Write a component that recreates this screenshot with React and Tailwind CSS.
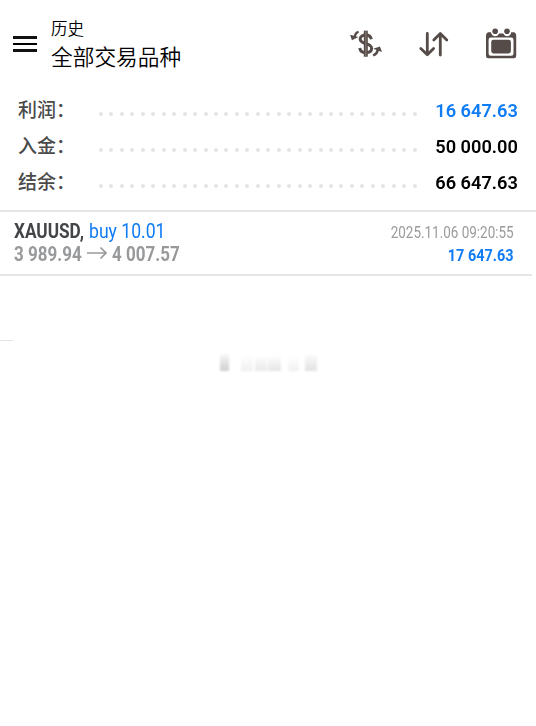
import React from 'react';

const rows = [
  { label: '利润', value: '16 647.63', color: 'text-[#0f7cf5]' },
  { label: '入金', value: '50 000.00', color: 'text-black' },
  { label: '结余', value: '66 647.63', color: 'text-black' },
];

function MenuIcon() {
  return (
    <div className="mt-9 ml-[13px] flex h-4 w-6 flex-col justify-between">
      <span className="h-[3px] bg-[#111]" />
      <span className="h-[2px] bg-black" />
      <span className="h-[3px] bg-[#111]" />
    </div>
  );
}

function DollarIcon() {
  return (
    <svg className="h-8 w-8" viewBox="0 0 32 32" fill="none" stroke="#554b48">
      <path d="M15.8 2.7V28.7" strokeWidth="4" />
      <path d="M21.3 11.3C20.7 8.5 18.7 7 15.8 7C12.4 7 10.2 8.7 10.2 11.1C10.2 13.7 12.4 14.7 15.8 15.6C19.6 16.6 21.6 17.8 21.6 20.4C21.6 23 19.4 24.5 15.8 24.5C12.4 24.5 10.2 23 9.7 19.9" strokeWidth="3" />
      <path d="M15.8 3.2V28.2" stroke="#81736f" strokeWidth="1.3" />
      <path d="M8.6 3.8C6 4.4 4.9 6.2 4.6 9.4" strokeWidth="2.4" />
      <path d="M0.1 6.8L1.9 12.2L8.4 9.1Z" fill="#554b48" stroke="none" />
      <path d="M23.1 27.4C25.9 26.3 27.5 24.3 27.8 21.3" strokeWidth="2.6" />
      <path d="M23.2 20.8L29.9 18.5L32 24Z" fill="#554b48" stroke="none" />
    </svg>
  );
}

function SortIcon() {
  return (
    <svg className="h-8 w-8" viewBox="0 0 32 32" fill="none" stroke="#554b48" strokeWidth="2.8" strokeLinecap="round" strokeLinejoin="round">
      <path d="M9.3 5.5V26.5M2.8 20.4L9.3 26.7L15.6 20.4" />
      <path d="M22.3 27V5.7M15.8 12L22.3 5.5L28.8 12" />
    </svg>
  );
}

function CalendarIcon() {
  return (
    <svg className="h-8 w-8" viewBox="0 0 32 32" fill="none">
      <path d="M3 4.2H6.2C6.6 7 8 8.2 10.2 8.2C12.3 8.2 13.3 7.4 13.8 5.5H18.6C19.2 7.4 20.2 8.2 22.2 8.2C24.4 8.2 25.7 7 26.2 4.2H29.2Q31.2 5 31.2 7.3V28Q31.2 30.3 28.9 30.3H3.3Q1 30.3 1 28V7.3Q1 5 3 4.2Z" fill="#554b48" />
      <rect x="3.6" y="9.5" width="24.9" height="18.2" rx="2.2" fill="white" />
      <rect x="6.2" y="11.7" width="19.7" height="13.7" rx="2.4" fill="#554b48" />
      <circle cx="10.2" cy="3.2" r="4" fill="white" />
      <circle cx="22" cy="3.2" r="4" fill="white" />
      <circle cx="10.2" cy="3.2" r="2.8" fill="#554b48" />
      <circle cx="22" cy="3.2" r="2.8" fill="#554b48" />
    </svg>
  );
}

function SummaryRow({ label, value, color }) {
  return (
    <div className="flex h-9 items-center">
      <div className="w-[99px] pl-[18px] text-[19px] leading-9 font-medium whitespace-nowrap text-[#4a4a4a]">{label}：</div>
      <div className="mt-[6px] flex w-[318px] justify-between">
        {Array.from({ length: 31 }, (_, i) => (
          <span key={i} className="size-1 rounded-full bg-[#e4e4e4]" />
        ))}
      </div>
      <div className={'mr-[18.5px] ml-auto origin-right scale-x-[.985] text-[18.5px] leading-9 font-semibold whitespace-pre ' + color}>{value}</div>
    </div>
  );
}

export default function App() {
  return (
    <div className="h-[726px] w-[536px] overflow-hidden bg-white font-['Roboto','Noto_Sans_CJK_SC',sans-serif]">
      <header className="flex h-[93px] items-start">
        <MenuIcon />
        <div className="ml-[14px] w-[140px] text-black">
          <div className="mt-[19px] text-[16.5px] leading-[22px] font-[350]">历史</div>
          <div className="mt-[3px] text-[21.7px] leading-7 font-[350] whitespace-nowrap">全部交易品种</div>
        </div>
        <div className="mt-7 mr-[19px] ml-auto flex gap-[35.5px]">
          <DollarIcon />
          <SortIcon />
          <CalendarIcon />
        </div>
      </header>

      <section className="h-[117px]">
        {rows.map((row) => <SummaryRow key={row.label} {...row} />)}
      </section>

      <section className="flex h-16 justify-between border-t-2 border-[#e6e6e6] pt-2 pr-[22px] pl-[14px]">
        <div className="w-[180px] whitespace-nowrap">
          <div className="flex h-[23px] gap-[5px] text-[20px] leading-[23px]">
            <span className="w-[70px]"><span className="inline-block origin-left scale-x-[.86] font-bold text-[#434548]">XAUUSD,</span></span>
            <span className="w-[76px]"><span className="inline-block origin-left scale-x-[.88] text-[#0f7cf5]">buy 10.01</span></span>
          </div>
          <div className="flex h-[23px] text-[20px] leading-[23px] font-bold text-[#98999b]">
            <span className="w-[73px]"><span className="inline-block origin-left scale-x-[.85]">3 989.94</span></span>
            <svg className="mt-[2px] h-4 w-5" viewBox="0 0 20 16" fill="none" stroke="#98999b" strokeWidth="1.7"><path d="M0 8H19M13.5 2.5L19 8L13.5 13.5" /></svg>
            <span className="ml-[5px]"><span className="inline-block origin-left scale-x-[.85]">4 007.57</span></span>
          </div>
        </div>
        <div className="text-right whitespace-nowrap">
          <div className="mt-px h-[23px] origin-right scale-x-[.816] text-[16.5px] leading-[23px] text-[#9b9b9b]">2025.11.06 09:20:55</div>
          <div className="h-[23px] origin-right scale-x-[.85] text-[17px] leading-[23px] font-bold text-[#0f7cf5]">17 647.63</div>
        </div>
      </section>
      <div className="h-[2px] w-[532px] bg-[#e6e6e6]" />
      <div className="mt-16 h-px w-[13px] bg-[#e3e3e3]" />
      <div className="mt-3 ml-[220px] flex h-[18px] items-end blur-[1px]">
        <span className="h-[17px] w-[9px] bg-linear-to-b from-[#f8f8f8] to-[#cfcfcf]" />
        <span className="ml-3 h-4 w-3 bg-linear-to-b from-white to-[#f0f0f0]" />
        <span className="ml-[2px] h-4 w-3 bg-linear-to-b from-white to-[#e9e9e9]" />
        <span className="ml-px h-4 w-[13px] bg-linear-to-b from-white to-[#e5e5e5]" />
        <span className="ml-[7px] h-[15px] w-[11px] bg-linear-to-b from-white to-[#f1f1f1]" />
        <span className="ml-[6px] h-4 w-3 bg-linear-to-b from-[#fafafa] to-[#e2e2e2]" />
      </div>
    </div>
  );
}
